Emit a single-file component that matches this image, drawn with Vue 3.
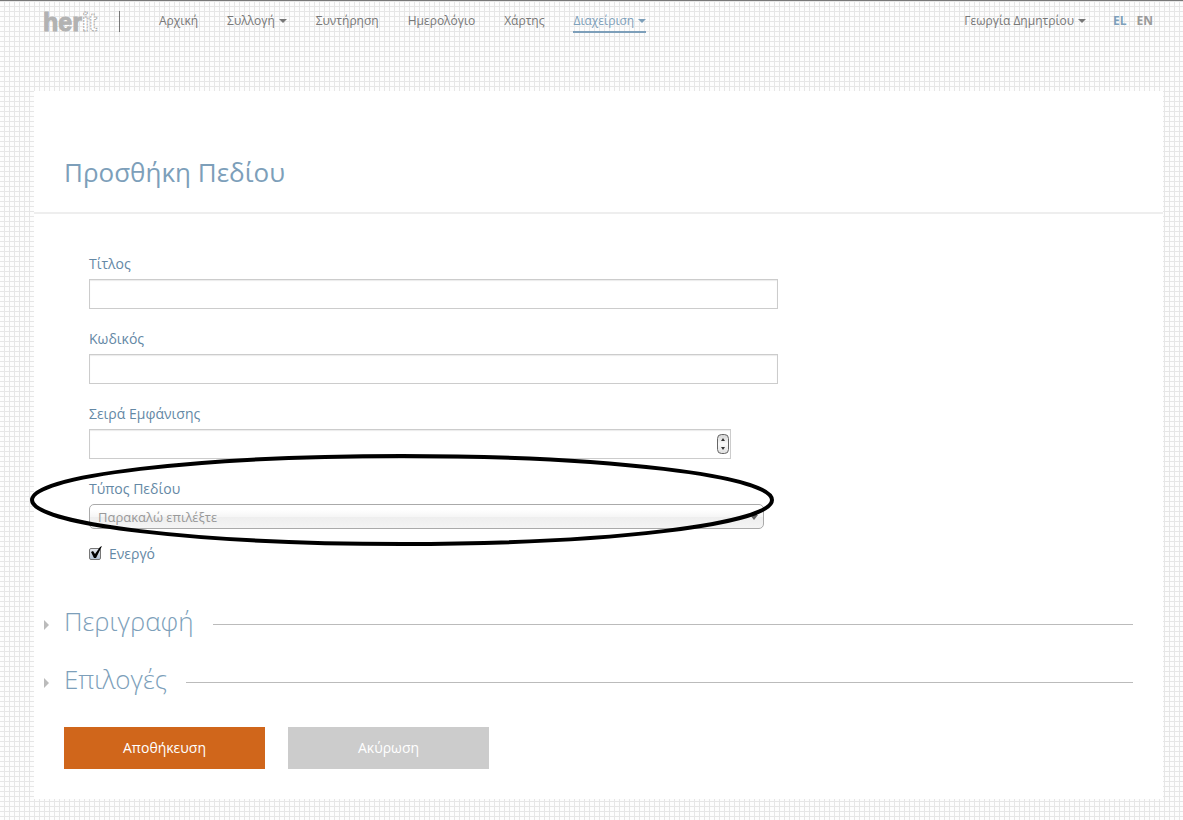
<script setup>
import { ref } from 'vue'

const links = [
  { text: 'Αρχική' },
  { text: 'Συλλογή', menu: true },
  { text: 'Συντήρηση' },
  { text: 'Ημερολόγιο' },
  { text: 'Χάρτης' },
  { text: 'Διαχείριση', menu: true, active: true },
]
const sections = ['Περιγραφή', 'Επιλογές']
const title = ref('')
const code = ref('')
const order = ref('')
const type = ref('')
const active = ref(true)
</script>

<template>
  <div class="page">
    <header class="topbar">
      <a class="logo" href="#" aria-label="herit">
        <svg width="60" height="32" viewBox="0 0 60 32">
          <text x="0" y="20"><tspan class="solid">her</tspan><tspan class="dotted">it</tspan></text>
        </svg>
      </a>
      <nav class="nav">
        <a v-for="l in links" :key="l.text" href="#" class="link" :class="{ active: l.active }">
          {{ l.text }}<span v-if="l.menu" class="caret"></span>
        </a>
      </nav>
      <a href="#" class="link user">Γεωργία Δημητρίου<span class="caret"></span></a>
      <div class="langs">
        <a href="#" class="lang current">EL</a>
        <a href="#" class="lang">EN</a>
      </div>
    </header>

    <main class="card">
      <div class="card-head">
        <h1>Προσθήκη Πεδίου</h1>
      </div>
      <form @submit.prevent>
        <div class="fields">
          <div class="field">
            <label for="title">Τίτλος</label>
            <input id="title" v-model="title" class="box wide" type="text" />
          </div>
          <div class="field">
            <label for="code">Κωδικός</label>
            <input id="code" v-model="code" class="box wide" type="text" />
          </div>
          <div class="field">
            <label for="order">Σειρά Εμφάνισης</label>
            <div class="number">
              <input id="order" v-model="order" class="box" type="number" />
              <svg class="spinner" width="12" height="20" viewBox="0 0 12 20">
                <defs>
                  <linearGradient id="spin" x1="0" y1="0" x2="0" y2="1">
                    <stop offset="0" stop-color="#d4d4d4" />
                    <stop offset="0.5" stop-color="#fafafa" />
                    <stop offset="1" stop-color="#dedede" />
                  </linearGradient>
                </defs>
                <rect x="0.5" y="0.5" width="11" height="19" rx="4" fill="url(#spin)" stroke="#666" />
                <path d="M6 4 L8 7 H4 Z M6 16 L8 13 H4 Z" fill="#333" />
              </svg>
            </div>
          </div>
          <div class="field type">
            <label for="type">Τύπος Πεδίου</label>
            <div class="picker">
              <select id="type" v-model="type">
                <option value="">Παρακαλώ επιλέξτε</option>
              </select>
              <span class="arrow"></span>
            </div>
            <svg class="ring" viewBox="0 0 744 92">
              <ellipse cx="372" cy="46" rx="370" ry="44" />
            </svg>
          </div>
          <label class="check">
            <span class="tick">
              <input v-model="active" type="checkbox" />
              <svg v-if="active" width="14" height="16" viewBox="0 0 14 16">
                <path d="M2 7 L4 6 L6 9 L11 2 L13 1 L7 13 L5 13 Z" />
              </svg>
            </span>
            Ενεργό
          </label>
        </div>

        <section v-for="s in sections" :key="s" class="section">
          <button type="button" class="toggle"><span class="marker"></span>{{ s }}</button>
          <span class="rule"></span>
        </section>

        <div class="actions">
          <button type="submit" class="btn save">Αποθήκευση</button>
          <button type="button" class="btn cancel">Ακύρωση</button>
        </div>
      </form>
    </main>
  </div>
</template>

<style>
body {
  margin: 0;
  background-color: #fdfdfd;
  background-image:
    linear-gradient(to right, transparent 4px, #e6e6e6 4px),
    linear-gradient(to bottom, transparent 1px, #e6e6e6 1px, #e6e6e6 2px, transparent 2px);
  background-size: 5px 5px;
}
</style>

<style scoped>
.page {
  box-sizing: border-box;
  min-height: 100vh;
  border-top: 1px solid #777;
  padding-bottom: 21px;
  font-family: "Open Sans", "Noto Sans", sans-serif;
}
.page *, .page *::before { box-sizing: border-box; }
.topbar {
  display: flex;
  align-items: flex-start;
  height: 90px;
  padding: 10px 30px 0 43px;
}
.logo {
  flex: none;
  width: 77px;
  height: 21px;
  border-right: 1px solid #777;
}
.logo svg { display: block; overflow: visible; }
.logo text { font: bold 25px/28px "Liberation Sans", Arial, sans-serif; }
.solid { fill: #b2b2b2; stroke: #b2b2b2; }
.dotted { fill: #fff; stroke: #aaa; stroke-dasharray: 2 1; }
.nav { display: flex; gap: 29px; margin-left: 39px; }
.link {
  display: flex;
  align-items: center;
  height: 22px;
  padding-bottom: 2px;
  font-size: 12px;
  line-height: 20px;
  color: #777;
  text-decoration: none;
  white-space: nowrap;
}
.link.active { color: #7d9fba; border-bottom: 2px solid #7d9fba; padding-bottom: 0; }
.caret {
  margin-left: 4px;
  border: 4px solid transparent;
  border-top-color: currentColor;
  border-bottom: 0;
}
.user { margin-left: auto; }
.langs { display: flex; gap: 10px; margin-left: 27px; }
.lang { font-size: 12px; font-weight: 700; line-height: 20px; color: #999; text-decoration: none; }
.lang.current { color: #7d9fba; }

.card { margin: 0 20px 0 34px; background: #fff; padding-bottom: 30px; }
.card-head { padding: 63px 30px 22px; border-bottom: 2px solid #eee; }
h1 { margin: 0; font-size: 26px; font-weight: 400; line-height: 36px; color: #7d9fba; }
.fields { padding: 40px 55px 31px; }
.field { margin-bottom: 20px; }
label { display: block; margin-bottom: 5px; font-size: 14px; line-height: 20px; color: #6488a5; }
.box {
  display: block;
  width: 100%;
  height: 30px;
  padding: 4px 6px;
  border: 1px solid #ccc;
  border-radius: 0;
  background: #fff;
  box-shadow: inset 0 1px 1px rgba(0, 0, 0, 0.08);
  font: 14px "Open Sans", sans-serif;
  color: #555;
  outline: 0;
}
.wide { max-width: 689px; }
.number { position: relative; max-width: 642px; }
.number .box { appearance: textfield; -moz-appearance: textfield; }
.number .box::-webkit-inner-spin-button { appearance: none; margin: 0; }
.spinner { position: absolute; right: 2px; top: 5px; }
.type { position: relative; margin-bottom: 15px; }
.picker { position: relative; max-width: 675px; }
select {
  display: block;
  width: 100%;
  height: 25px;
  padding: 0 24px 0 8px;
  appearance: none;
  border: 1px solid #aaa;
  border-radius: 5px;
  background: linear-gradient(to bottom, #fff 20%, #f6f6f6 50%, #eee 52%, #f4f4f4 100%);
  font: 13px "Open Sans", sans-serif;
  color: #999;
}
.arrow {
  position: absolute;
  right: 6px;
  top: 11px;
  border: 4px solid transparent;
  border-top: 5px solid #666;
  border-bottom: 0;
}
.ring {
  position: absolute;
  left: -59px;
  top: -25px;
  width: 744px;
  height: 92px;
  pointer-events: none;
}
.ring ellipse { fill: none; stroke: #000; stroke-width: 4; }
.check { display: flex; align-items: center; width: max-content; gap: 7px; margin: 0; }
.tick { position: relative; display: block; width: 13px; height: 13px; }
.tick input {
  display: block;
  width: 12px;
  height: 12px;
  margin: 0;
  appearance: none;
  border: 1px solid #777;
  border-radius: 2px;
  background: linear-gradient(#e6e9ee, #b4c3d5);
}
.tick svg { position: absolute; left: 0; top: -3px; pointer-events: none; }
.tick path { fill: #000; }
.section { display: flex; align-items: center; height: 58px; padding: 0 30px 0 10px; }
.toggle {
  display: flex;
  align-items: center;
  padding: 0 0 6px;
  border: 0;
  background: none;
  font: 300 26px/36px "Open Sans", sans-serif;
  color: #7d9fba;
}
.marker {
  margin: 8px 15px 0 0;
  border: 5px solid transparent;
  border-left-color: #bbb;
  border-right: 0;
}
.rule { flex: 1; height: 1px; margin-left: 19px; background: #bbb; }
.actions { display: flex; gap: 23px; padding: 16px 30px 0; }
.btn {
  width: 201px;
  height: 42px;
  padding: 0 0 2px;
  border: 0;
  font: 14px "Open Sans", sans-serif;
  color: #fff;
}
.save { background: #d0661b; }
.cancel { background: #ccc; }
</style>
